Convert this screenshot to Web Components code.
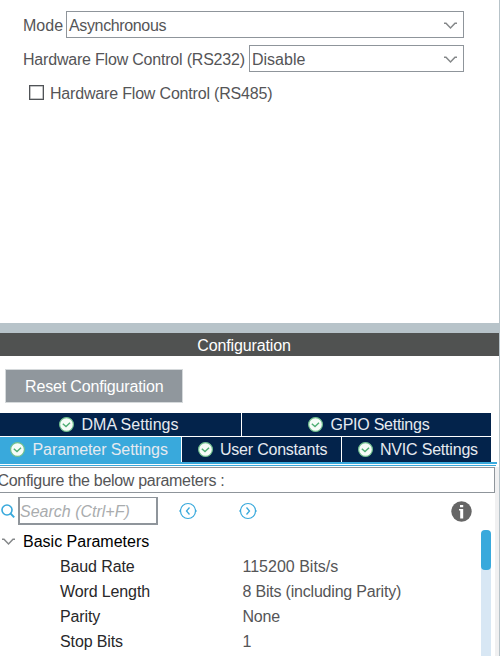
<!DOCTYPE html>
<html lang="en">
<head>
<meta charset="utf-8">
<title>Configuration</title>
<style>
html,body{margin:0;height:100%;background:#fff}
body{font:16px/20px "Liberation Sans",Arial,sans-serif;color:#555557;overflow:hidden}
</style>
</head>
<body>
<config-app></config-app>
<script>
const define = (name, html) => customElements.define(name, class extends HTMLElement {
  constructor() {
    super();
    const t = document.createElement('template');
    t.innerHTML = '<style>*{box-sizing:border-box}:host{box-sizing:border-box}</style>' + html;
    this.attachShadow({mode: 'open'}).append(t.content.cloneNode(true));
  }
});

define('chevron-icon', `<style>:host{display:block;width:13px;height:8px}svg{display:block}</style>
<svg width="13" height="8" viewBox="0 0 13 8" fill="none" stroke="#85888a" stroke-width="1.5"><path d="M0 1.2H2L6.5 6L11 1.2H13"/></svg>`);

define('check-icon', `<style>:host{display:block;width:15px;height:15px}svg{display:block}</style>
<svg width="15" height="15" viewBox="0 0 15 15"><circle cx="7.5" cy="7.5" r="6.9" fill="#f6fcf8" stroke="#6fbf8d" stroke-width="1.2"/><path d="M3.8 6.8L7 9.6L11 5.8" fill="none" stroke="#4fae74" stroke-width="1.4"/></svg>`);

define('select-box', `<style>
:host{display:flex;align-items:center;justify-content:space-between;height:27px;border:1px solid #8f959b;padding:2px 6px 0 2px;flex:1;background:#fff}
</style><slot></slot><chevron-icon></chevron-icon>`);

define('form-row', `<style>
:host{display:flex;align-items:center;height:27px;margin-bottom:7px;white-space:nowrap}
.label{flex:none;width:var(--label);padding-top:2px}
</style><span class="label"><slot name="label"></slot></span><slot></slot>`);

define('check-row', `<style>
:host{display:flex;align-items:center;height:27px;gap:6px;padding-left:6px;letter-spacing:-.18px}
i{width:15px;height:15px;border:1.5px solid #505357;box-shadow:inset 0 0 0 .5px #8a8c8e}
span{padding-top:2px}
</style><i></i><span><slot></slot></span>`);

define('title-bar', `<style>
:host{display:block;flex:none;height:33px;border-top:10px solid #b7c3c9;background:#505251;color:#fff;text-align:center;padding:3px 11px 0 0;letter-spacing:-.13px}
</style><slot></slot>`);

define('push-button', `<style>
:host{display:block;width:178px;height:34px;background:#90979d;border:1px solid #d5d9db;color:#fff;padding:7px 0 0 19px;letter-spacing:-.16px}
</style><slot></slot>`);

define('tab-item', `<style>
:host{display:flex;flex:none;width:var(--w);height:100%;background:#03234b;color:#e6eaf0;padding-left:var(--p);gap:7.5px;align-items:center;white-space:nowrap;letter-spacing:var(--ls)}
:host([active]){background:#39a9dc}
</style><check-icon></check-icon><slot></slot>`);

define('tab-row', `<style>
:host{display:flex;gap:1px;height:var(--h);width:491px;margin-bottom:var(--mb,0)}
</style><slot></slot>`);

define('search-bar', `<style>
:host{display:flex;align-items:center;height:37px;padding-bottom:1px}
.box{width:140px;height:28px;border:2px solid #8f959b;border-top-width:1.5px;margin-left:2px;padding:4px 0 0 0;color:#a9acae;font-style:italic}
svg{display:block;flex:none}
.prev{margin-left:21px}.next{margin-left:42px}.info{margin-left:194px}
</style>
<svg width="16" height="16" viewBox="0 0 16 16" fill="none" stroke="#39a9dc"><circle cx="7" cy="7" r="5" stroke-width="1.6"/><path d="M10.4 10.4L14.2 14.4" stroke-width="2"/></svg>
<div class="box"><slot></slot></div>
<svg class="prev" width="18" height="18" viewBox="0 0 18 18" fill="none" stroke="#39a9dc"><circle cx="9" cy="9" r="7.5" stroke-width="1.2"/><path d="M0 9H2M16 9H18" opacity=".5" stroke-width="2"/><path d="M10.5 5.5L7.5 9L10.5 12.5" stroke-width="1.3"/></svg>
<svg class="next" width="18" height="18" viewBox="0 0 18 18" fill="none" stroke="#39a9dc"><circle cx="9" cy="9" r="7.5" stroke-width="1.2"/><path d="M0 9H2M16 9H18" opacity=".5" stroke-width="2"/><path d="M7.5 5.5L10.5 9L7.5 12.5" stroke-width="1.3"/></svg>
<svg class="info" width="21" height="21" viewBox="0 0 21 21"><circle cx="10.5" cy="10.5" r="10.2" fill="#666"/><path d="M9 4h3.2v2.2H9zM8 8h4.2v9.5H9.2V9.5H8z" fill="#fff"/></svg>`);

define('param-row', `<style>
:host{display:grid;grid-template-columns:182.5px 1fr;padding-left:60px;height:25px;line-height:25px}
.k{color:#28282a;letter-spacing:-.12px}
.v{letter-spacing:var(--ls,0)}
</style><span class="k"><slot name="name"></slot></span><span class="v"><slot></slot></span>`);

define('scroll-bar', `<style>
:host{display:block;width:10px;background:#d8e7f4;border-radius:5px 5px 0 0;margin-right:4px}
div{height:40px;border-radius:4px;background:#39a9dc}
</style><div></div>`);

define('config-app', `<style>
:host{display:flex;flex-direction:column;width:500px;height:656px;border-right:1px solid #b7c3c9;overflow:hidden}
.mode{height:323px;flex:none;padding:11px 35px 0 23px}
.button{padding:13px 0 10px 5px;height:57px;flex:none}
.tabs{height:49px;flex:none}
.rule{height:2px;width:497px;background:#39a9dc;flex:none}
.rule.thin{height:1px;width:496px;margin:1px 0}
.foot{display:flex;flex:1;min-height:0}
.main{width:495px;flex:none;display:flex;flex-direction:column}
.gutter{flex:1;background:#f0f0f1}
.hint{height:26px;border:1px solid #8f959b;border-left:0;white-space:nowrap;padding-top:3px;flex:none;letter-spacing:-.3px}
.hint span{margin-left:-2.5px}
.body{display:flex;flex:1}
.list{flex:1}
.group{display:flex;align-items:center;height:24px;padding:0 0 0 2px;gap:8px;color:#000}
</style>
<section class="mode">
<form-row style="--label:43px"><span slot="label">Mode</span><select-box style="letter-spacing:-.36px">Asynchronous</select-box></form-row>
<form-row style="--label:226px"><span slot="label" style="letter-spacing:-.2px">Hardware Flow Control (RS232)</span><select-box>Disable</select-box></form-row>
<check-row>Hardware Flow Control (RS485)</check-row>
</section>
<title-bar>Configuration</title-bar>
<div class="button"><push-button>Reset Configuration</push-button></div>
<div class="tabs">
<tab-row style="--h:23px;--mb:1px"><tab-item style="--w:241px;--p:59px;--ls:0px">DMA Settings</tab-item><tab-item style="--w:249px;--p:66px;--ls:-.26px">GPIO Settings</tab-item></tab-row>
<tab-row style="--h:25px"><tab-item active style="--w:181px;--p:10px;--ls:-.09px">Parameter Settings</tab-item><tab-item style="--w:159px;--p:15.5px;--ls:-.22px">User Constants</tab-item><tab-item style="--w:149px;--p:15.5px;--ls:-.2px">NVIC Settings</tab-item></tab-row>
</div>
<div class="rule"></div><div class="rule thin"></div>
<div class="foot"><div class="main">
<div class="hint"><span>Configure the below parameters :</span></div>
<search-bar>Search (Ctrl+F)</search-bar>
<div class="body"><div class="list">
<div class="group"><chevron-icon></chevron-icon><span>Basic Parameters</span></div>
<param-row><span slot="name">Baud Rate</span>115200 Bits/s</param-row>
<param-row style="--ls:-.2px"><span slot="name">Word Length</span>8 Bits (including Parity)</param-row>
<param-row style="--ls:-.2px"><span slot="name">Parity</span>None</param-row>
<param-row><span slot="name">Stop Bits</span>1</param-row>
</div><scroll-bar></scroll-bar></div>
</div><div class="gutter"></div></div>`);
</script>
</body>
</html>
